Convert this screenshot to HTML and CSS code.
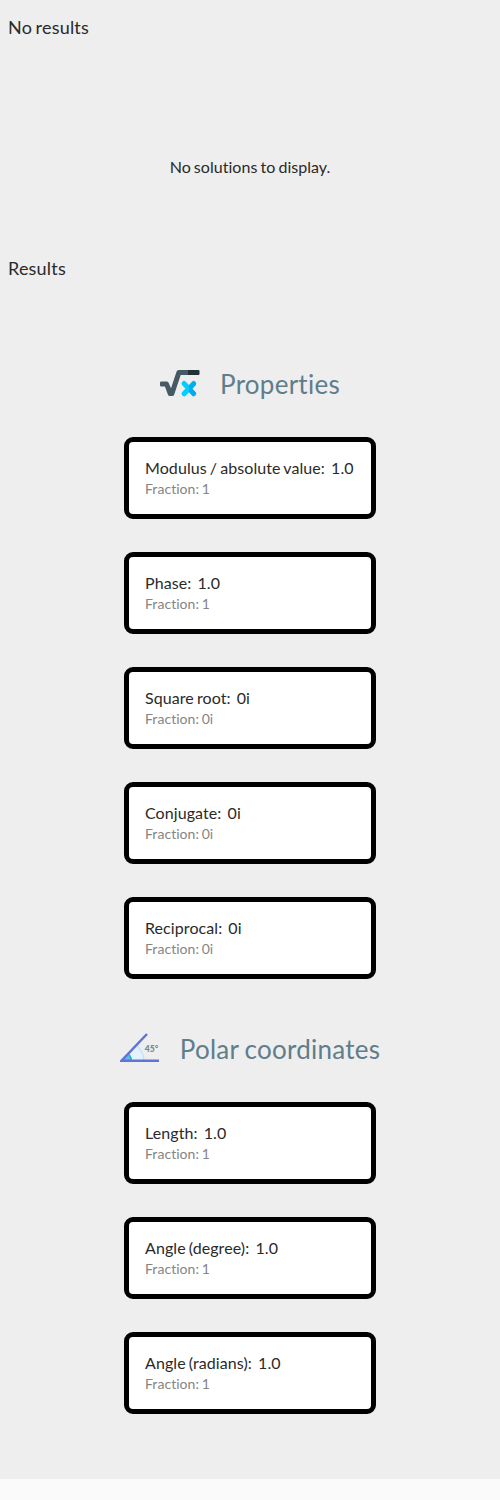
FILE: index.html
```html
<!DOCTYPE html>
<html lang="en">
<head>
<meta charset="utf-8">
<title>Results</title>
<link rel="stylesheet" href="styles.css">
</head>
<body>
<main class="page">
  <h2 class="label">No results</h2>
  <p class="empty"><span>No solutions to display.</span></p>
  <h2 class="label">Results</h2>
  <section class="group">
    <header class="heading">
      <svg class="icon" viewBox="0 0 40 40">
        <path d="M1.300 17.500H6.500Q8 17.500 8.600 18.800L11 24.200 16.600 7.500Q17.100 6 18.600 6H28V11H20.700L14.200 30.500Q13.800 32 12.200 32H9.700Q8.500 32 8 30.700L4.900 22.500H1.300Q0 22.500 0 21.200V18.800Q0 17.500 1.300 17.500Z" fill="#455a64"/>
        <path d="M28 6H38.500Q39.500 6 39.500 7V10Q39.500 11 38.500 11H28Z" fill="#263238"/>
        <path d="M24 19.500 33.700 29.800M33.700 19.500 24 29.800" stroke="#00d0ff" stroke-width="5" stroke-linecap="round"/>
        <path d="M28.800 22.300 32.300 18Q33.500 16.700 34.700 17.800L35.800 19Q36.600 20 35.800 21L32.300 24.700 35.800 28.400Q36.600 29.400 35.800 30.400L34.700 31.500Q33.500 32.500 32.300 31.500L28.800 27.500Z" fill="#00aeef"/>
      </svg>
      <h1 class="title">Properties</h1>
    </header>
    <article class="card"><p class="name">Modulus / absolute value:  1.0</p><p class="fraction">Fraction: 1</p></article>
    <article class="card"><p class="name">Phase:  1.0</p><p class="fraction">Fraction: 1</p></article>
    <article class="card"><p class="name">Square root:  0i</p><p class="fraction">Fraction: 0i</p></article>
    <article class="card"><p class="name">Conjugate:  0i</p><p class="fraction">Fraction: 0i</p></article>
    <article class="card"><p class="name">Reciprocal:  0i</p><p class="fraction">Fraction: 0i</p></article>
  </section>
  <section class="group polar">
    <header class="heading">
      <svg class="icon" viewBox="0 0 40 40">
        <path d="M2 32.500 18.300 16.500A22 22 0 0 1 25 32.500Z" fill="#e3f2fd"/>
        <path d="M17.500 17.500A21 21 0 0 1 24 32.500" fill="none" stroke="#c5e1fa" stroke-width="1.500"/>
        <path d="M2 32.500 9 24.500A11 11 0 0 1 12 32.500Z" fill="#64b5f6"/>
        <path d="M8.500 25.500A9 9 0 0 1 11.500 31.500" fill="none" stroke="#26bfa0" stroke-width="1.500"/>
        <path d="M27 5 1.500 31.700H39" fill="none" stroke="#5f73d8" stroke-width="2.500"/>
        <text class="degrees" x="24.800" y="23">45°</text>
      </svg>
      <h1 class="title">Polar coordinates</h1>
    </header>
    <article class="card"><p class="name">Length:  1.0</p><p class="fraction">Fraction: 1</p></article>
    <article class="card"><p class="name">Angle (degree):  1.0</p><p class="fraction">Fraction: 1</p></article>
    <article class="card"><p class="name">Angle (radians):  1.0</p><p class="fraction">Fraction: 1</p></article>
  </section>
</main>
</body>
</html>
```
FILE: styles.css
```css
* { box-sizing: border-box; }
body { margin: 0; background: #fafafa; font-family: Lato, sans-serif; color: #2a2a2a; font-variant-ligatures: none; }
h1, h2, p { margin: 0; font-weight: 400; }
.page { height: 1479px; background: #eee; padding-top: 16px; }
.label { padding-left: 8px; font-size: 18px; line-height: 22px; letter-spacing: .2px; word-spacing: -1.3px; }
.empty { height: 219px; padding-top: 119px; text-align: center; font-size: 16px; line-height: 19px; letter-spacing: .03px; word-spacing: -1px; }
.group { display: flex; flex-direction: column; align-items: center; gap: 33px; padding-top: 84px; }
.polar { padding-top: 49px; }
.heading { display: flex; align-items: center; gap: 20px; height: 41px; }
.icon { width: 40px; height: 40px; }
.title { font-size: 26px; line-height: 31px; letter-spacing: .25px; word-spacing: -1px; color: #607d8b; padding-top: 1px; }
.card { width: 252px; height: 82px; border: 5px solid #000; border-radius: 9px; background: #fff; padding: 16px; white-space: pre; }
.name { font-size: 16px; line-height: 20px; letter-spacing: .08px; word-spacing: -1.1px; }
.fraction { font-size: 14px; line-height: 22px; letter-spacing: .05px; word-spacing: -1px; color: #858585; }
.degrees { font: 900 8.5px Lato, sans-serif; fill: #6f8b97; }
```
